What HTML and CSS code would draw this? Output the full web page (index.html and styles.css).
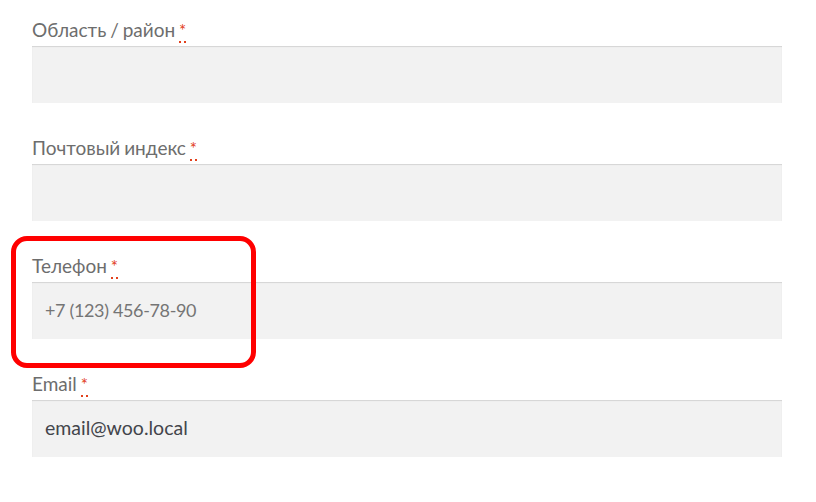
FILE: index.html
```html
<!DOCTYPE html>
<html lang="ru">
<head>
<meta charset="utf-8">
<link rel="stylesheet" href="styles.css">
</head>
<body>
<form class="form">
  <div class="field">
    <label class="label">Область / район <abbr class="req" title="обязательно">*</abbr></label>
    <div class="input"></div>
  </div>
  <div class="field">
    <label class="label">Почтовый индекс <abbr class="req" title="обязательно">*</abbr></label>
    <div class="input"></div>
  </div>
  <div class="field">
    <label class="label">Телефон <abbr class="req" title="обязательно">*</abbr></label>
    <div class="input placeholder">+7 (123) 456-78-90</div>
    <div class="highlight"></div>
  </div>
  <div class="field">
    <label class="label">Email <abbr class="req" title="обязательно">*</abbr></label>
    <div class="input value">email@woo.local</div>
  </div>
</form>
</body>
</html>
```
FILE: styles.css
```css
html, body {
  margin: 0;
  padding: 0;
  background: #ffffff;
}
body {
  font-family: "Lato", "Liberation Sans", sans-serif;
  width: 816px;
  height: 502px;
  overflow: hidden;
}
.form {
  display: flex;
  flex-direction: column;
  gap: 33px;
  padding: 18px 0 0 32px;
  width: 750px;
}
.field {
  position: relative;
  display: flex;
  flex-direction: column;
}
.label {
  height: 28px;
  line-height: 24px;
  font-size: 19px;
  color: #6d6d6d;
  word-spacing: -1px;
}
.req {
  color: #e2401c;
  text-decoration: none;
  border-bottom: 2px dotted #e2401c;
  font-size: 17px;
}
.input {
  height: 57px;
  box-sizing: border-box;
  background: #f2f2f2;
  box-shadow: inset 0 1px 1px rgba(0, 0, 0, 0.125);
  padding: 0 13px 2px;
  display: flex;
  align-items: center;
  font-size: 19px;
}
.placeholder {
  color: #757575;
  font-size: 18px;
  letter-spacing: -0.35px;
}
.value {
  color: #43454b;
  font-size: 19.5px;
}
.highlight {
  position: absolute;
  left: -21px;
  top: -18px;
  width: 245px;
  height: 132px;
  box-sizing: border-box;
  border: 5px solid #ff0000;
  border-radius: 16px;
  pointer-events: none;
}
```
